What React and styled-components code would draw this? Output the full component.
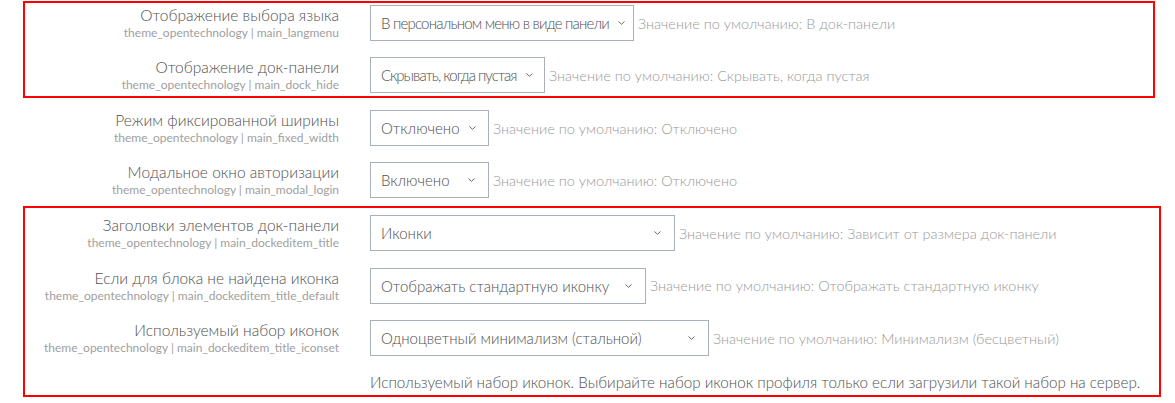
import React from 'react';
import styled, { createGlobalStyle } from 'styled-components';

const GlobalStyle = createGlobalStyle`
  body {
    margin: 0;
    background: #fff;
    font-family: Lato, "Open Sans", sans-serif;
  }
  * { box-sizing: border-box; }
`;

const Page = styled.div`
  width: 1175px;
  height: 403px;
  padding-top: 1px;
  overflow: hidden;
`;

const Box = styled.div`
  width: ${({ $width }) => $width}px;
  margin: ${({ $top }) => $top}px 0 0 23px;
  border: 2px solid #ff0000;
  padding: ${({ $pt }) => $pt}px 0 3px;
`;

const Row = styled.div`
  display: flex;
  align-items: flex-start;
  margin-top: ${({ $gap }) => $gap}px;
  height: 36px;
`;

const LabelCol = styled.div`
  width: ${({ $boxed }) => ($boxed ? 314 : 339)}px;
  margin-right: 31px;
  text-align: right;
  flex-shrink: 0;
`;

const Title = styled.div`
  font-size: 15.5px;
  line-height: 20px;
  font-weight: 300;
  color: #4f4f4f;
  white-space: nowrap;
`;

const Sub = styled.div`
  font-size: 12px;
  line-height: 16px;
  color: #a0a0a0;
  white-space: nowrap;
`;

const Control = styled.div`
  display: flex;
  align-items: center;
  gap: 4px;
  height: 36px;
`;

const Select = styled.div`
  width: ${({ $w }) => $w}px;
  height: 36px;
  border: 1px solid #a9b0bc;
  display: flex;
  align-items: center;
  justify-content: space-between;
  gap: 8px;
  padding: 0 12px 0 10px;
  font-size: 15px;
  font-weight: 300;
  letter-spacing: ${({ $ls }) => $ls || 0}px;
  color: #4f4f4f;
  white-space: nowrap;
  flex-shrink: 0;
  overflow: hidden;
`;

const Default = styled.span`
  font-size: 14.5px;
  font-weight: 300;
  color: #999;
  white-space: nowrap;
`;

const Help = styled.div`
  margin: 16px 0 0 345px;
  font-size: 15.2px;
  font-weight: 300;
  line-height: 20px;
  color: #4f4f4f;
  white-space: nowrap;
`;

const Chevron = () => (
  <svg width="9" height="6" viewBox="0 0 9 6" style={{ flexShrink: 0 }}>
    <path d="M1.5 1.5 L4.5 4.3 L7.5 1.5" fill="none" stroke="#666" strokeWidth="1" />
  </svg>
);

const Setting = ({ title, code, value, width, ls, def, gap = 0, boxed }) => (
  <Row $gap={gap}>
    <LabelCol $boxed={boxed}>
      <Title>{title}</Title>
      <Sub>theme_opentechnology | {code}</Sub>
    </LabelCol>
    <Control>
      <Select $w={width} $ls={ls}>
        <span>{value}</span>
        <Chevron />
      </Select>
      <Default>Значение по умолчанию: {def}</Default>
    </Control>
  </Row>
);

export default function App() {
  return (
    <Page>
      <GlobalStyle />
      <Box $width={1132} $top={0} $pt={2}>
        <Setting boxed title="Отображение выбора языка" code="main_langmenu"
          value="В персональном меню в виде панели" width={264} ls={-0.8} def="В док-панели" />
        <Setting boxed gap={16} title="Отображение док-панели" code="main_dock_hide"
          value="Скрывать, когда пустая" width={175} ls={-1} def="Скрывать, когда пустая" />
      </Box>
      <Setting gap={12} title="Режим фиксированной ширины" code="main_fixed_width"
        value="Отключено" width={119} def="Отключено" />
      <Setting gap={16} title="Модальное окно авторизации" code="main_modal_login"
        value="Включено" width={119} def="Отключено" />
      <Box $width={1138} $top={8} $pt={7}>
        <Setting boxed title="Заголовки элементов док-панели" code="main_dockeditem_title"
          value="Иконки" width={305} def="Зависит от размера док-панели" />
        <Setting boxed gap={16.5} title="Если для блока не найдена иконка" code="main_dockeditem_title_default"
          value="Отображать стандартную иконку" width={276} def="Отображать стандартную иконку" />
        <Setting boxed gap={16.5} title="Используемый набор иконок" code="main_dockeditem_title_iconset"
          value="Одноцветный минимализм (стальной)" width={339} def="Минимализм (бесцветный)" />
        <Help>Используемый набор иконок. Выбирайте набор иконок профиля только если загрузили такой набор на сервер.</Help>
      </Box>
    </Page>
  );
}
